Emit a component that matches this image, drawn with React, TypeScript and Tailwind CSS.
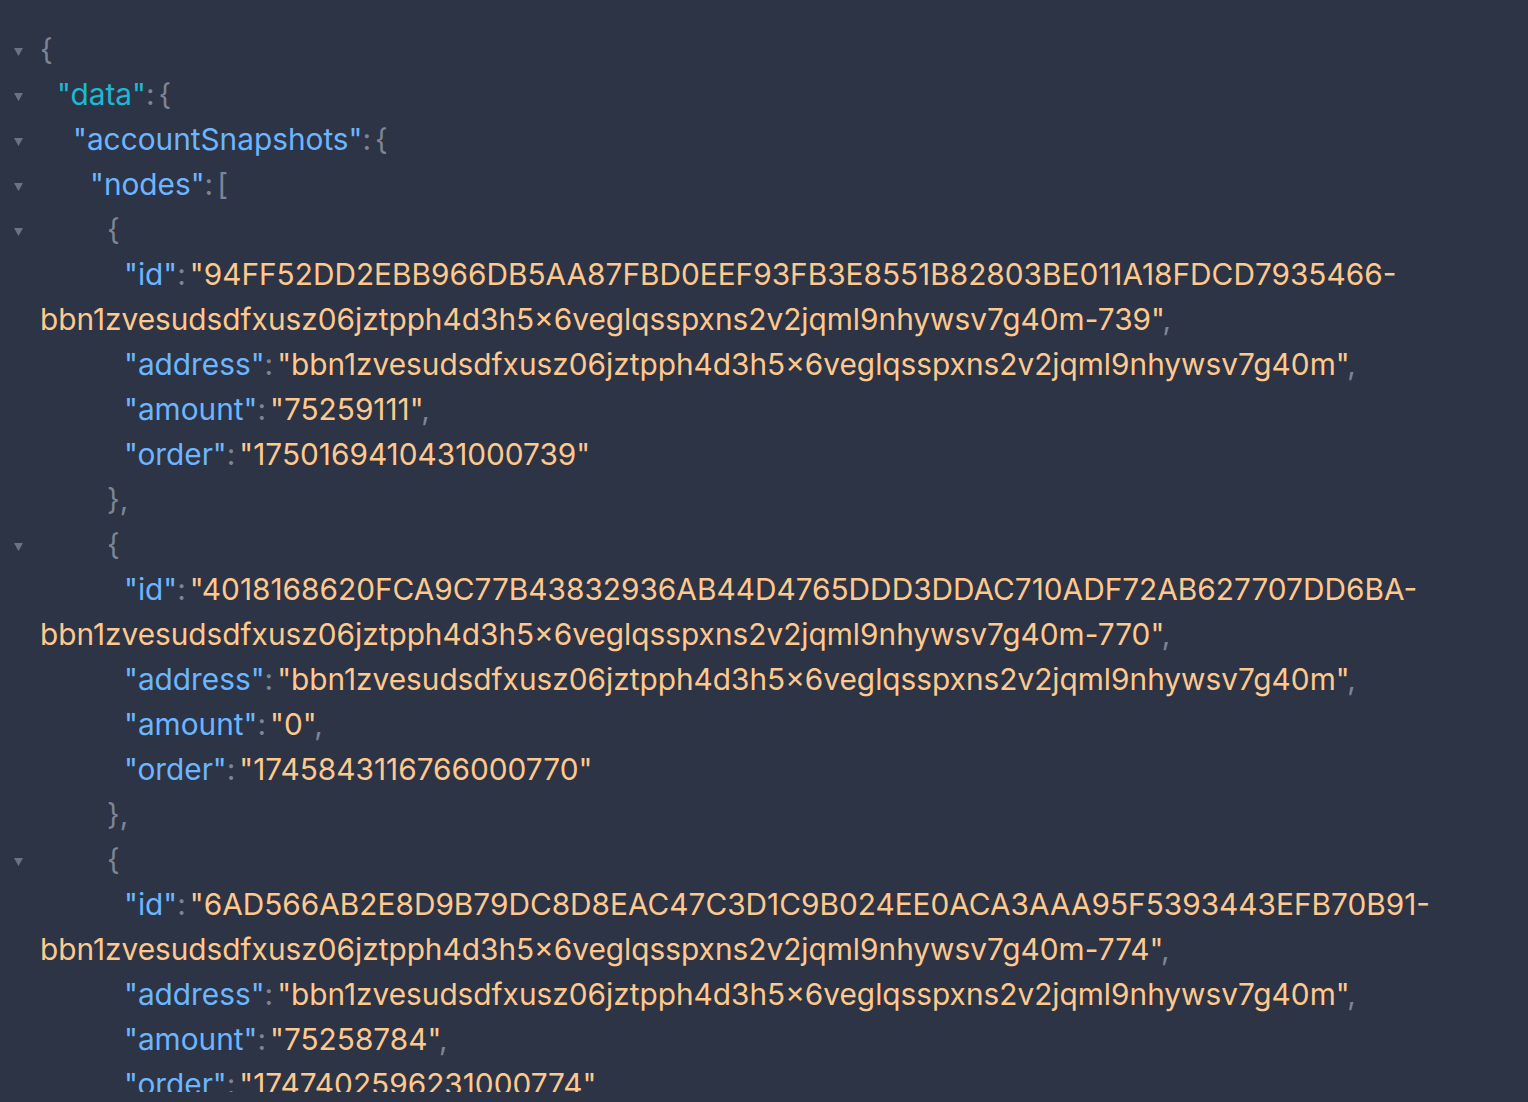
const INDENT = ['w-0', 'w-[17px]', 'w-[33px]', 'w-[50px]', 'w-[67px]', 'w-[84px]'];

type Tok = { t: 'p' | 'k' | 'r' | 's' | 'g'; v: string };
type Row = { lvl: number; tri?: boolean; toks: Tok[] };

const P = (v: string): Tok => ({ t: 'p', v });
const K = (v: string): Tok => ({ t: 'k', v });
const S = (v: string): Tok => ({ t: 's', v });
// colon plus a tighter gap than a full space
const C: Tok[] = [P(':'), { t: 'g', v: '' }];

const ADDR = 'bbn1zvesudsdfxusz06jztpph4d3h5×6veglqsspxns2v2jqml9nhywsv7g40m';

function node(id: string, suffix: string, amount: string, order: string, last: boolean): Row[] {
  return [
    { lvl: 4, tri: true, toks: [P('{')] },
    { lvl: 5, toks: [K('"id"'), ...C, S('"' + id + '-')] },
    { lvl: 0, toks: [S(ADDR + '-' + suffix + '"'), P(',')] },
    { lvl: 5, toks: [K('"address"'), ...C, S('"' + ADDR + '"'), P(',')] },
    { lvl: 5, toks: [K('"amount"'), ...C, S('"' + amount + '"'), P(',')] },
    { lvl: 5, toks: [K('"order"'), ...C, S('"' + order + '"')] },
    ...(last ? [] : [{ lvl: 4, toks: [P('},')] }]),
  ];
}

const rows: Row[] = [
  { lvl: 0, tri: true, toks: [P('{')] },
  { lvl: 1, tri: true, toks: [{ t: 'r', v: '"data"' }, ...C, P('{')] },
  { lvl: 2, tri: true, toks: [K('"accountSnapshots"'), ...C, P('{')] },
  { lvl: 3, tri: true, toks: [K('"nodes"'), ...C, P('[')] },
  ...node('94FF52DD2EBB966DB5AA87FBD0EEF93FB3E8551B82803BE011A18FDCD7935466', '739', '75259111', '1750169410431000739', false),
  ...node('4018168620FCA9C77B43832936AB44D4765DDD3DDAC710ADF72AB627707DD6BA', '770', '0', '1745843116766000770', false),
  ...node('6AD566AB2E8D9B79DC8D8EAC47C3D1C9B024EE0ACA3AAA95F5393443EFB70B91', '774', '75258784', '1747402596231000774', true),
];

const color = {
  p: 'text-[#7d8595]',
  k: 'text-[#6cb6ff]',
  r: 'text-[#1db8d2]',
  s: 'text-[#fec98f]',
  g: 'inline-block w-[4px]',
};

function Caret() {
  return (
    <svg width="9" height="8" viewBox="0 0 9 8" className="mt-[5px]">
      <path d="M0 0 H9 L4.5 8 Z" fill="#6b7382" />
    </svg>
  );
}

export default function App() {
  return (
    <div className="h-[1102px] bg-[#2d3445] pb-[10px] font-['Inter',sans-serif]">
      <div className="h-full overflow-hidden pt-[27px]">
        {rows.map((row, i) => (
          <div key={i} className="flex h-[45px] items-center">
            <div className="flex w-[40px] shrink-0 justify-start pl-[14px]">
              {row.tri && <Caret />}
            </div>
            <span className={`inline-block shrink-0 ${INDENT[row.lvl]}`} />
            <div className="whitespace-pre text-[29.8px] leading-[45px]">
              {row.toks.map((tok, j) => (
                <span key={j} className={color[tok.t]}>
                  {tok.v}
                </span>
              ))}
            </div>
          </div>
        ))}
      </div>
    </div>
  );
}
